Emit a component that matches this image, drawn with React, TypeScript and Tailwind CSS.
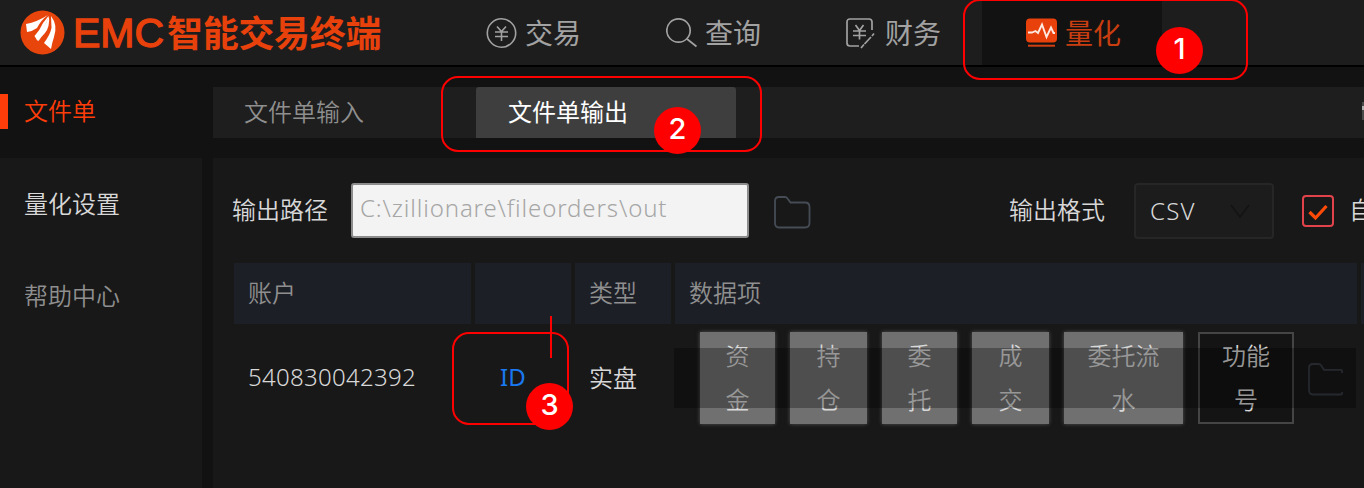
import React from "react";

type NavItem = { label: string; icon: React.ReactNode; active?: boolean };

const navItems: NavItem[] = [
  {
    label: "交易",
    icon: (
      <svg width="31" height="32" viewBox="0 0 31 32" fill="none" stroke="#a2a2a2" strokeWidth="1.6">
        <circle cx="15.5" cy="16" r="14.2" />
        <path d="M11 9.500l4.500 5 4.500-5M9 15h13M9 19.500h13M15.500 14.500v9.500" />
      </svg>
    ),
  },
  {
    label: "查询",
    icon: (
      <svg width="31" height="32" viewBox="0 0 31 32" fill="none" stroke="#a2a2a2" strokeWidth="1.7">
        <circle cx="12.500" cy="13.500" r="11.700" />
        <path d="M21 22l9.500 7.500" />
      </svg>
    ),
  },
  {
    label: "财务",
    icon: (
      <svg width="31" height="32" viewBox="0 0 31 32" fill="none" stroke="#a2a2a2" strokeWidth="1.7">
        <path d="M26 13V5q0-3-3-3H4Q1 2 1 5v21q0 3 3 3h9" />
        <path d="M9.500 8l4 5.500 4-5.500M7 14h13M7 18.500h13M13.500 13.500v9" />
        <path d="M15 31l3-3.500M18.500 27l6.500-7M26 19l2-2.500" />
      </svg>
    ),
  },
  {
    label: "量化",
    active: true,
    icon: (
      <svg width="31" height="32" viewBox="0 0 31 32">
        <rect x="0" y="1.500" width="31" height="24" rx="4" fill="#e8410c" />
        <path d="M2 15.500h4l3.500-1.500 2.500 2L16 7.500l4.500 12.500 4.500-9.500 2.500 5.500H29" fill="none" stroke="#ffe9e0" strokeWidth="1.900" />
        <path d="M2 28.700h27" stroke="#d04012" strokeWidth="2" />
      </svg>
    ),
  },
];

const Folder = ({ open = false }: { open?: boolean }) => (
  <svg width="38" height="34" viewBox="0 0 38 34" fill="none" stroke={open ? "#363b42" : "#454c55"} strokeWidth="1.800">
    {open ? (
      <path d="M35 11V8.500q0-.700-1-.700H17l-3-4.500Q13 2 11.500 2H6Q2 2 2 6v22q0 4.500 4 4.500h28q1 0 1-1V30" />
    ) : (
      <path d="M2 6q0-4 4-4h6q1.500 0 2.500 1.500L17.500 7.500H32q4.500 0 4.500 4.500v16q0 4.500-4.500 4.500H6q-4 0-4-4.500z" />
    )}
  </svg>
);

const dataButtons = [
  { label: "资金", cls: "w-[75px]" },
  { label: "持仓", cls: "ml-[15px] w-[77px]" },
  { label: "委托", cls: "ml-[15px] w-[75px]" },
  { label: "成交", cls: "ml-[15px] w-[77px]" },
  { label: "委托流水", cls: "ml-[15px] w-[119px]" },
];

function Badge({ n, cls }: { n: number; cls: string }) {
  return (
    <div className={`absolute flex size-[47px] items-center justify-center rounded-full bg-[#fe0000] pb-[4px] font-['Inter',sans-serif] text-[29px] leading-none font-medium text-white ${cls}`}>
      {n}
    </div>
  );
}

export default function App() {
  return (
    <div className="relative flex h-[488px] w-[1364px] flex-col overflow-hidden bg-[#121212] font-['Noto_Sans_CJK_SC',sans-serif] text-[24px] leading-none font-[350] whitespace-nowrap">
      <header className="flex h-[67px] shrink-0 border-b-2 border-black bg-[#1d1d1d]">
        <div className="flex w-[442px] items-center pl-[20px]">
          <svg width="45" height="45" viewBox="0 0 45 45">
            <circle cx="22.500" cy="22.500" r="22" fill="#e8450d" />
            <g fill="#fff">
              <path d="M6 14Q17 12 28 5Q21 10 17 18Q13 21 7 22Z" />
              <path d="M28.500 6Q28 11 22 20Q20 24 17.500 31L14.500 26Q20 20 23 13Z" />
              <path d="M15 26Q25 18 29 6Q30 17 25 23Q21 27 18.500 31Z" />
              <path d="M31 6Q38 15 34 27Q32 33 31 39L24 33Q30 25 31.500 18Z" />
            </g>
          </svg>
          <span className="ml-[8px] w-[94px] pt-[2px] font-['Liberation_Sans',sans-serif] text-[41px] font-normal text-[#e8410c] [-webkit-text-stroke:1.3px_#e8410c]">EMC</span>
          <span className="pb-[4px] text-[36px] leading-[36px] font-bold tracking-[-0.3px] text-[#e8410c]">智能交易终端</span>
        </div>
        {navItems.map((item) => (
          <div
            key={item.label}
            className={`flex w-[180px] items-center gap-[8px] pl-[44px] text-[28px] font-normal ${item.active ? "bg-[#121212] text-[#c83e10]" : "text-[#a2a2a2]"}`}
          >
            {item.icon}
            <span className="pb-px">{item.label}</span>
          </div>
        ))}
      </header>

      <div className="flex min-h-0 flex-1">
        <aside className="flex w-[202px] shrink-0 flex-col">
          <div className="mt-[27px] flex h-[35px] items-center">
            <div className="h-full w-[8px] bg-[#ff3d0a]" />
            <span className="ml-[16px] pb-[4px] text-[#ff3d0a]">文件单</span>
          </div>
          <nav className="mt-[29px] flex flex-1 flex-col gap-[68px] bg-[#181818] pt-[33px] pl-[24px]">
            <span className="text-[#d8d8d8]">量化设置</span>
            <span className="text-[#8f8f8f]">帮助中心</span>
          </nav>
        </aside>

        <main className="ml-[11px] flex min-w-0 flex-1 flex-col">
          <div className="mt-[20px] flex h-[51px] shrink-0 items-center bg-[#1e1e1e]">
            <div className="w-[263px] pb-[4px] pl-[31px] text-[#8f8f8f]">文件单输入</div>
            <div className="flex h-full w-[260px] items-center rounded-t-[3px] bg-[#3e3e3e] pb-[4px] pl-[32px] font-normal text-white">文件单输出</div>
            <div className="mb-[3px] ml-auto flex h-[18px] w-[2px] flex-col bg-[#4a4a4a] pt-[4px]">
              <div className="h-[4px] bg-[#b0b0b0]" />
            </div>
          </div>

          <section className="mt-[20px] flex flex-1 flex-col bg-[#181818]">
            <div className="flex h-[105px] shrink-0 items-center pl-[19px] text-[#d8d8d8]">
              <span className="shrink-0 pb-[3px]">输出路径</span>
              <div className="ml-[23px] flex h-[55px] w-[398px] shrink-0 items-center rounded-[3px] border-2 border-[#8c8c8c] bg-[#f3f3f3] pb-[5px] pl-[7px] font-['Noto_Sans',sans-serif] text-[24px] tracking-[0.88px] text-[#a6a6a6]">
                C:\zillionare\fileorders\out
              </div>
              <div className="ml-[24px] shrink-0 pt-[3px]"><Folder /></div>
              <span className="ml-[198px] shrink-0 pb-[3px]">输出格式</span>
              <div className="ml-[29px] flex h-[56px] w-[140px] shrink-0 items-center justify-between rounded-[4px] border-2 border-[#262626] bg-[#1c1c1c] pr-[22px] pl-[14px] font-['Noto_Sans',sans-serif] text-[24px] tracking-[1.200px]">
                CSV
                <svg width="20" height="16" viewBox="0 0 20 16" fill="none" stroke="#131313" strokeWidth="1.500"><path d="M1 2l9 12 9-12" /></svg>
              </div>
              <svg className="ml-[28px] shrink-0" width="32" height="32" viewBox="0 0 32 32" fill="none">
                <rect x="1" y="1" width="30" height="30" rx="3" stroke="#e2434b" strokeWidth="2" />
                <path d="M7.500 17l6 6 11-12" stroke="#ff4a08" strokeWidth="3.200" />
              </svg>
              <span className="ml-[15px] shrink-0 pb-[3px]">自</span>
            </div>

            <div className="ml-[21px] flex h-[61px] shrink-0 items-center gap-[4px] text-[#8f8f8f]">
              <div className="flex h-full w-[237px] shrink-0 items-center bg-[#1d1f26] pb-[3px] pl-[14px]">账户</div>
              <div className="h-full w-[96px] shrink-0 bg-[#1d1f26]" />
              <div className="flex h-full w-[96px] shrink-0 items-center bg-[#1d1f26] pb-[3px] pl-[14px]">类型</div>
              <div className="flex h-full w-[682px] shrink-0 items-center bg-[#1d1f26] pb-[3px] pl-[14px]">数据项</div>
              <div className="h-full w-[3px] shrink-0 bg-[#1d1f26]" />
            </div>

            <div className="relative ml-[21px] flex h-[108px] items-center text-[#d8d8d8]">
              <span className="w-[266px] pb-[2px] pl-[14px] font-['Noto_Sans',sans-serif] tracking-[0.3px]">540830042392</span>
              <span className="w-[89px] pb-[2px] font-['Noto_Sans',sans-serif] font-normal text-[#1a78f0]">ID</span>
              <span className="w-[111px] pb-[2px]">实盘</span>
              {dataButtons.map((b) => (
                <div key={b.label} className={`flex h-[92px] shrink-0 items-center justify-center bg-[#707070] pb-[3px] text-center shadow-[0_0_4px_#555] ${b.cls}`}>
                  <span className={`leading-[44px] whitespace-normal ${b.label.length > 2 ? "w-[74px]" : "w-[24px]"}`}>{b.label}</span>
                </div>
              ))}
              <div className="ml-[15px] flex h-[92px] w-[96px] shrink-0 items-center justify-center border-2 border-[#454545] bg-[#141414] pb-[3px] text-center">
                <span className="w-[50px] leading-[44px] whitespace-normal">功能号</span>
              </div>
              <div className="ml-[13px] shrink-0 pt-[2px]"><Folder open /></div>
              <div className="absolute top-[24px] left-[440px] h-[60px] w-[682px] bg-black/30" />
            </div>
          </section>
        </main>
      </div>

      <div className="absolute top-[-1px] left-[963px] h-[81px] w-[285px] rounded-[17px] border-2 border-[#fe0000]" />
      <div className="absolute top-[76px] left-[441px] h-[76px] w-[321px] rounded-[17px] border-2 border-[#fe0000]" />
      <div className="absolute top-[332px] left-[452px] h-[93px] w-[117px] rounded-[17px] border-2 border-[#fe0000]" />
      <div className="absolute top-[316px] left-[550px] h-[42px] w-[2px] bg-[#fe0000]" />
      <Badge n={1} cls="top-[27px] left-[1156px]" />
      <Badge n={2} cls="top-[107px] left-[654px]" />
      <Badge n={3} cls="top-[383px] left-[526px]" />
    </div>
  );
}
